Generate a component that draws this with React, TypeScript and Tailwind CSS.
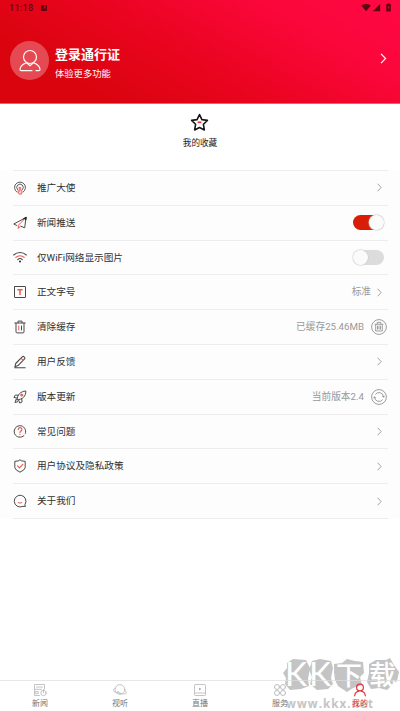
import React from "react";

const K = "#4a4a4a";
const R = "#ee5b50";

function Svg({ children, className = "w-[14px] h-[14px]", stroke = K, sw = 1 }: {
  children: React.ReactNode; className?: string; stroke?: string; sw?: number;
}) {
  return (
    <svg viewBox="0 0 14 14" className={className} fill="none" stroke={stroke} strokeWidth={sw} strokeLinecap="round" strokeLinejoin="round">
      {children}
    </svg>
  );
}

const Ambassador = () => (
  <Svg sw={0.9}>
    <path d="M4 11.2A5.5 5.5 0 1 1 10 11.2" />
    <path d="M4.500 8.600A3.300 3.300 0 1 1 9.500 8.600" />
    <path d="M6.300 6.500v3.800l-1.500-.6 1.200 3.400h2.500l.6-3.300-1.400-.5V6.500q-.7-.9-1.400 0z" stroke={R} fill="#fbd5d2" />
  </Svg>
);
const Plane = () => (
  <Svg>
    <path d="M13 1.500L.8 8l2.800 1.400M13 1.500l-1.300 10.300-4-1.600" />
    <path d="M12 2.500L5.300 9.300v3.200l1.900-2.200" stroke={R} />
    <path d="M10.800 2.800L13 1.500l-.2 2" stroke="#222222" strokeWidth="1.300" />
  </Svg>
);
const Wifi = () => (
  <Svg sw={1.100}>
    <path d="M.7 5a9 9 0 0 1 12.600 0" />
    <path d="M2.800 7.400a6 6 0 0 1 8.400 0" stroke={R} />
    <path d="M4.700 9.600a3.400 3.400 0 0 1 4.600 0" />
    <circle cx="7" cy="11.600" r="1" fill="#222222" stroke="none" />
  </Svg>
);
const TextSize = () => (
  <Svg>
    <rect x="1.500" y="1.500" width="11" height="11" rx=".4" />
    <path d="M4.400 4.700h5.200M7 4.700v5.300" stroke={R} strokeWidth="1.500" strokeLinecap="butt" />
  </Svg>
);
const Trash = () => (
  <Svg>
    <path d="M1.800 3h10.400M5 2.800V1.100h4v1.700M3 3.200v8.600q0 1.100 1.100 1.100h5.800q1.100 0 1.100-1.100V3.200M8.500 6v4" />
    <path d="M5.800 6v4" stroke={R} />
  </Svg>
);
const Pencil = () => (
  <Svg sw={1.100}>
    <path d="M1.800 12.800h10.400M2 11.700l.7-3.200 6.800-6.800q.8-.6 1.600.1l.5.5q.7.8 0 1.600l-6.600 6.700z" />
    <path d="M8.200 3.300l2.200 2.200" stroke={R} />
  </Svg>
);
const Rocket = () => (
  <Svg>
    <path d="M4 9.800C4.200 5 7.400 1.400 12.800 1c.1 5-2.800 8.600-8.800 8.800zM5 5.300L2.400 5 .9 7.400l3.300.7M8.700 8.800l.4 3.100-2.300 1.200-1.200-3M3 9.500l-1 3 2.800-.8" />
    <circle cx="8.700" cy="5.100" r="1" stroke={R} fill={R} />
  </Svg>
);
const Question = () => (
  <Svg>
    <path d="M11 11.600A5.800 5.800 0 1 1 12.400 9.400" />
    <path d="M5.300 5.500a1.800 1.800 0 1 1 2.600 1.600Q7 7.600 7 8.400M7 10.200v.1" stroke={R} strokeWidth="1.200" />
  </Svg>
);
const Shield = () => (
  <Svg>
    <path d="M7 .9l1.600 1 3.600.4v6.400Q11.800 11 7 13.200 2.200 11 1.800 8.700V2.300l3.600-.4z" />
    <path d="M4.600 6.900l1.900 1.900 3.300-3.500" stroke={R} strokeWidth="1.200" />
  </Svg>
);
const Smile = () => (
  <Svg>
    <path d="M9.400 12.600A5.900 5.900 0 1 1 12.200 10.200M9.800 12.400h2.700l-.6-1.500" />
    <path d="M5.200 8.700q1.800 1 3.600 0" stroke={R} />
  </Svg>
);

function Chevron({ className = "w-[5px] h-[9px] text-[#a2a2a2]" }: { className?: string }) {
  return (
    <svg viewBox="0 0 5 9" className={className} fill="none" stroke="currentColor" strokeWidth="1">
      <path d="M.5.7l3.700 3.800L.5 8.300" />
    </svg>
  );
}

function Toggle({ on }: { on: boolean }) {
  return (
    <div className={`flex h-[15px] w-[31px] items-center rounded-full ${on ? "justify-end bg-[#d81e06]" : "bg-[#dcdcdc]"}`}>
      <div className="size-[15px] rounded-full bg-[#fbfbfb] shadow-[0_0_1px_0.500px_#cccccc]" />
    </div>
  );
}

const RoundTrash = () => (
  <svg viewBox="0 0 16 16" className="size-[16px]" fill="none" stroke="#929292" strokeWidth=".9">
    <circle cx="8" cy="8" r="7.400" />
    <path d="M3.600 5.300h8.800M6.200 5V3.400h3.600V5M4.700 5.500v6.500h6.600V5.500M6.500 6.700v3.800M8 6.700v3.800M9.500 6.700v3.800" />
  </svg>
);
const RoundSync = () => (
  <svg viewBox="0 0 16 16" className="size-[16px]" fill="none" stroke="#929292" strokeWidth=".9">
    <circle cx="8" cy="8" r="7.400" />
    <path d="M4.300 5.500A4.500 4.500 0 0 1 12.500 8M11.700 10.500A4.500 4.500 0 0 1 3.500 8M2.500 9.200l1-1.500 1.400 1.300M11.200 7l1.300 1.300 1.100-1.400" />
  </svg>
);

const rows: { icon: React.ReactNode; label: string; value?: string; end: React.ReactNode; wide?: boolean }[] = [
  { icon: <Ambassador />, label: "推广大使", end: <Chevron /> },
  { icon: <Plane />, label: "新闻推送", end: <Toggle on />, wide: true },
  { icon: <Wifi />, label: "仅WiFi网络显示图片", end: <Toggle on={false} />, wide: true },
  { icon: <TextSize />, label: "正文字号", value: "标准", end: <Chevron /> },
  { icon: <Trash />, label: "清除缓存", value: "已缓存25.46MB", end: <RoundTrash />, wide: true },
  { icon: <Pencil />, label: "用户反馈", end: <Chevron /> },
  { icon: <Rocket />, label: "版本更新", value: "当前版本2.4", end: <RoundSync />, wide: true },
  { icon: <Question />, label: "常见问题", end: <Chevron /> },
  { icon: <Shield />, label: "用户协议及隐私政策", end: <Chevron /> },
  { icon: <Smile />, label: "关于我们", end: <Chevron /> },
];

const G = "#bdbdbd";
const tabs = [
  { label: "新闻", icon: (
    <Svg stroke={G} sw={0.9}><path d="M6.500 12.500h-5V1.500h10V6M3.500 4h6M1.500 6.300h7M3 8.500h2.300v2.200H3z" /><circle cx="10.500" cy="10" r="2.700" /><path d="M10.500 6.500v3.300" /></Svg>
  ) },
  { label: "视听", icon: (
    <Svg stroke={G} sw={0.9}><circle cx="7" cy="6.500" r="4.900" /><path d="M2.300 5C-.5 7-.3 8.600 3.500 9.400l5.500 1.300c4.500.8 5.500-.5 3-3.200" /><path d="M3.800 9.200q.8-2 2.700.4" /></Svg>
  ) },
  { label: "直播", icon: (
    <Svg stroke={G} sw={0.9}><rect x="1.500" y="1.500" width="11" height="11" rx=".8" /><path d="M1.500 10h11" /><path d="M6.200 4.700v2.600L8.400 6z" fill="#999999" stroke="none" /></Svg>
  ) },
  { label: "服务", icon: (
    <Svg stroke={G}><circle cx="4" cy="4" r="2.500" /><circle cx="10" cy="4" r="2.500" /><circle cx="4" cy="10" r="2.500" /><circle cx="10" cy="10" r="2.500" /></Svg>
  ) },
  { label: "我的", active: true, icon: (
    <Svg stroke="#e3333b" sw={1.200}><circle cx="7" cy="4.500" r="3.400" /><path d="M1.700 12.800Q2 9 5.800 8.200M8.200 8.200Q12 9 12.300 12.800" /></Svg>
  ) },
];

function Watermark() {
  return (
    <div className="pointer-events-none absolute left-[282px] top-[656px] h-[55px] w-[118px]">
      <svg viewBox="0 0 118 55" className="h-[55px] w-[118px]">
        <g fill="#c4c4c4">
          <path d="M5 7l6-4 13 1 4 8-2 11 1 7-8 3-11 1-5-6 1-6-3-5 4-5z" />
          <path d="M30 5l8-2 11 2 2 7-2 10 2 6-5 5-11 1-7-6 2-7-3-7z" />
          <path d="M52 8l8-1 5-4 8 2 8 1 1 11-4 4 2 8-9 3-6 4-9-6-3-6-1-8z" />
          <path d="M87 8l7-4 10 0 4-2 4 7 5 7-2 9-5 4-5 5-8-2-8 1-4-7 2-9z" />
        </g>
        <g fill="#ffffff">
          <text x="3" y="30" fontSize="33" fontFamily="Lato, sans-serif" textLength="22" lengthAdjust="spacingAndGlyphs">K</text>
          <text x="27" y="30" fontSize="33" fontFamily="Lato, sans-serif" textLength="22" lengthAdjust="spacingAndGlyphs">K</text>
          <text x="54" y="29" fontSize="26" fontWeight="500" fontFamily="'Noto Sans CJK SC', sans-serif">下</text>
          <text x="87" y="29" fontSize="27" fontWeight="500" fontFamily="'Noto Sans CJK SC', sans-serif">载</text>
        </g>
        <text x="4" y="52" fontSize="11.500" fontWeight="700" fontFamily="'Open Sans', sans-serif" fill="#c4c4c4" textLength="87" lengthAdjust="spacing">www.kkx.net</text>
      </svg>
    </div>
  );
}

export default function App() {
  return (
    <div className="relative flex h-[711px] w-[400px] flex-col overflow-hidden bg-white font-[Roboto,'Noto_Sans_CJK_SC',sans-serif]">
      <header className="flex h-[104px] shrink-0 flex-col border-b border-[#f75a68] bg-[linear-gradient(30deg,#d9040e_18%,#e9041e_45%,#fb073b_76%,#ff0844)]">
        <div className="flex h-[17px] items-center pl-[9px] pr-[9px] text-[#5d0713]">
          <span className="text-[9px] font-medium leading-none tracking-[0.300px]">11:18</span>
          <span className="ml-[8px] mt-[-1px] flex size-[6px] items-center justify-center rounded-[1px] bg-[#5d0713] text-[5px] font-bold text-[#d10516]">A</span>
          <svg viewBox="0 0 30 9" className="ml-auto mt-[-2px] h-[9px] w-[30px]" fill="currentColor">
            <path d="M.3 2.500Q5 -1 9.900 2.500L5.100 8.300z" />
            <path d="M19.200.8v7.400h-7.400z" />
            <path d="M25.800 1h1V.2h2V1h1v7.500h-4.500V1z" />
            <path d="M27.800 2.300l-1.300 2.500h1v2l1.300-2.600h-1z" fill="#e20736" />
          </svg>
        </div>
        <div className="flex h-[87px] items-center pl-[10px] pr-[13px] pt-[2px] text-white">
          <div className="flex size-[39px] items-center justify-center rounded-full bg-[#e54a53]">
            <svg viewBox="0 0 22 24" className="h-[24px] w-[22px]" fill="none" stroke="white" strokeWidth="1.200" strokeLinecap="round">
              <circle cx="11" cy="8" r="6.500" />
              <path d="M7.500 13.700Q1.300 16 1 20.500q0 1.200 1.200 1.200H13M17 21.700h2.800q1.200 0 1.200-1.200Q20.700 16 14.500 13.700M7.500 13.700l3.500 3 3.500-3" />
            </svg>
          </div>
          <div className="ml-[6px] mt-[5px] flex flex-col">
            <div className="text-[13px] font-bold leading-[18px]">登录通行证</div>
            <div className="mt-[3px] text-[9.300px] leading-[14px]">体验更多功能</div>
          </div>
          <Chevron className="ml-auto mt-[-4px] h-[11px] w-[7px] text-white" />
        </div>
      </header>

      <section className="flex h-[66px] shrink-0 flex-col items-center pt-[9px]">
        <svg viewBox="0 0 18 18" className="mr-[1px] size-[19px]" fill="none" stroke="#151515" strokeWidth="1.500" strokeLinejoin="round">
          <path d="M9 1.500l2.300 4.800 5.200.7-3.800 3.700.9 5.400L9 13.700l-4.600 2.400.9-5.400L1.500 7l5.200-.7z" />
          <path d="M7.200 8.800h3.600" stroke="#e4332b" />
        </svg>
        <div className="mt-[5px] text-[8.600px] leading-[12px] text-[#222222]">我的收藏</div>
      </section>

      <main className="h-[349px] shrink-0 bg-[#fdfdfd] pl-[13px] pr-[12px]">
        <div className="border-t border-[#ededed]">
          {rows.map((r) => (
            <div key={r.label} className={`flex h-[34.800px] items-center border-b border-[#ededed] ${r.wide ? "pr-[1px]" : "pr-[6px]"}`}>
              <div className="flex h-[14px] w-[24px] shrink-0 items-center">{r.icon}</div>
              <span className="whitespace-nowrap text-[9.650px] leading-none text-[#303030]">{r.label}</span>
              <div className="ml-auto flex items-center">
                {r.value && <span className={`whitespace-nowrap text-[9.700px] leading-none text-[#999999] ${r.wide ? "mr-[7px]" : "mr-[6px]"}`}>{r.value}</span>}
                <div className={r.value || !r.wide ? "" : "mr-[3px]"}>{r.end}</div>
              </div>
            </div>
          ))}
        </div>
      </main>

      <Watermark />

      <nav className="relative mt-auto flex h-[31px] shrink-0 border-t border-[#dddddd]/70">
        {tabs.map((t) => (
          <div key={t.label} className="flex flex-1 flex-col items-center pt-[2px]">
            {t.icon}
            <span className={`mt-[1px] text-[8px] leading-[11px] ${t.active ? "text-[#e3333b]" : "text-[#777777]"}`}>{t.label}</span>
          </div>
        ))}
      </nav>
    </div>
  );
}
